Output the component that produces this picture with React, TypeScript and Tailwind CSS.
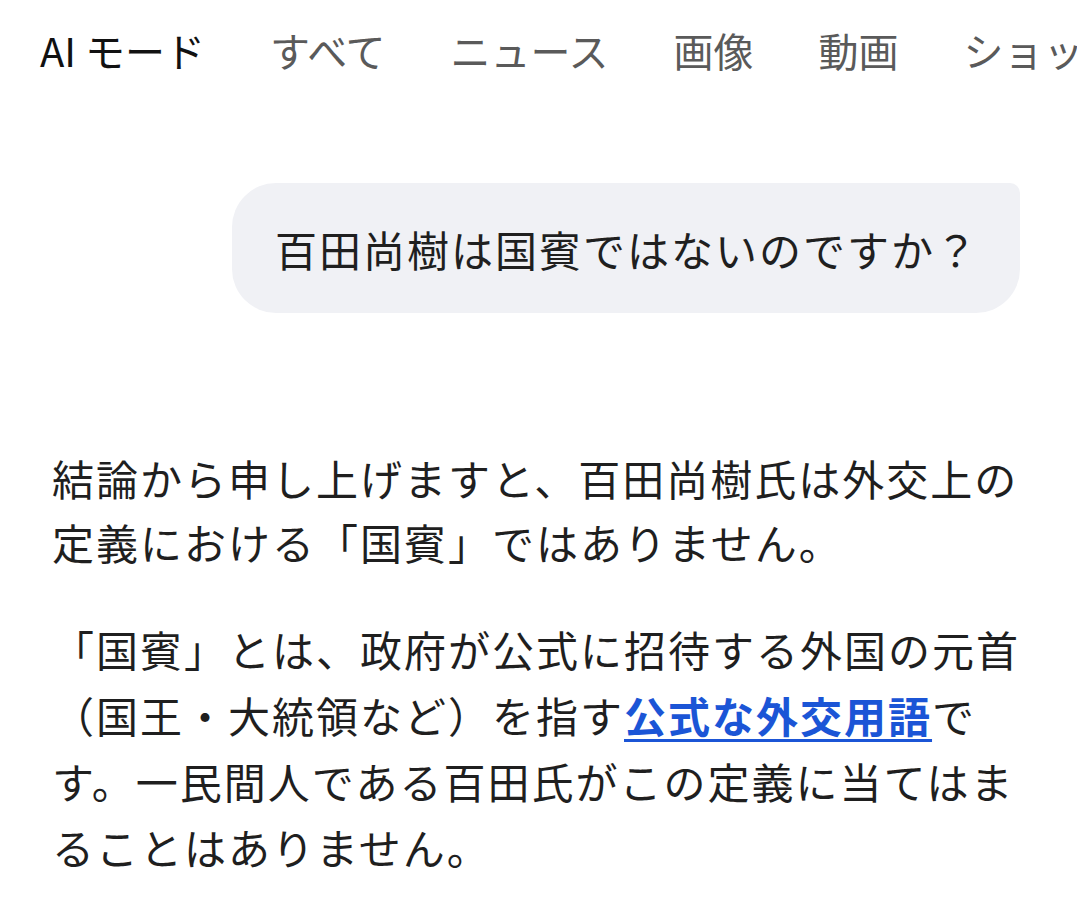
import React from "react";

const tabs = ["すべて", "ニュース", "画像", "動画", "ショッピング"];

const App: React.FC = () => {
  return (
    <div
      className="w-[1077px] h-[911px] overflow-hidden bg-white text-[#1f1f1f]"
      style={{ fontFamily: '"Noto Sans CJK JP", "Noto Sans", sans-serif' }}
    >
      {/* tab strip */}
      <div className="flex gap-[65px] pl-[40px] pt-[30px] text-[40px] leading-[40px] whitespace-nowrap">
        <span className="text-[#111]">AI モード</span>
        {tabs.map((t) => (
          <span key={t} className="text-[#5a5a5a]">
            {t}
          </span>
        ))}
      </div>

      {/* user question */}
      <div className="flex justify-end pr-[57px] mt-[113px]">
        <div className="w-[788px] h-[130px] flex items-center pl-[43px] bg-[#f0f1f5] rounded-[44px] rounded-tr-[10px] text-[42px] tracking-[2px] whitespace-nowrap">
          百田尚樹は国賓ではないのですか？
        </div>
      </div>

      {/* answer */}
      <div className="pl-[52px] mt-[133px] text-[42px] tracking-[2px] whitespace-nowrap">
        <p className="leading-[64px]">
          結論から申し上げますと、百田尚樹氏は外交上の
          <br />
          定義における「国賓」ではありません。
        </p>
        <p className="leading-[66px] mt-[42px]">
          「国賓」とは、政府が公式に招待する外国の元首
          <br />
          （国王・大統領など）を指す
          <a href="#" className="text-[#1b55d6] font-bold underline underline-offset-[6px] decoration-[3px]">
            公式な外交用語
          </a>
          で
          <br />
          す。一民間人である百田氏がこの定義に当てはま
          <br />
          ることはありません。
        </p>
      </div>
    </div>
  );
};

export default App;
